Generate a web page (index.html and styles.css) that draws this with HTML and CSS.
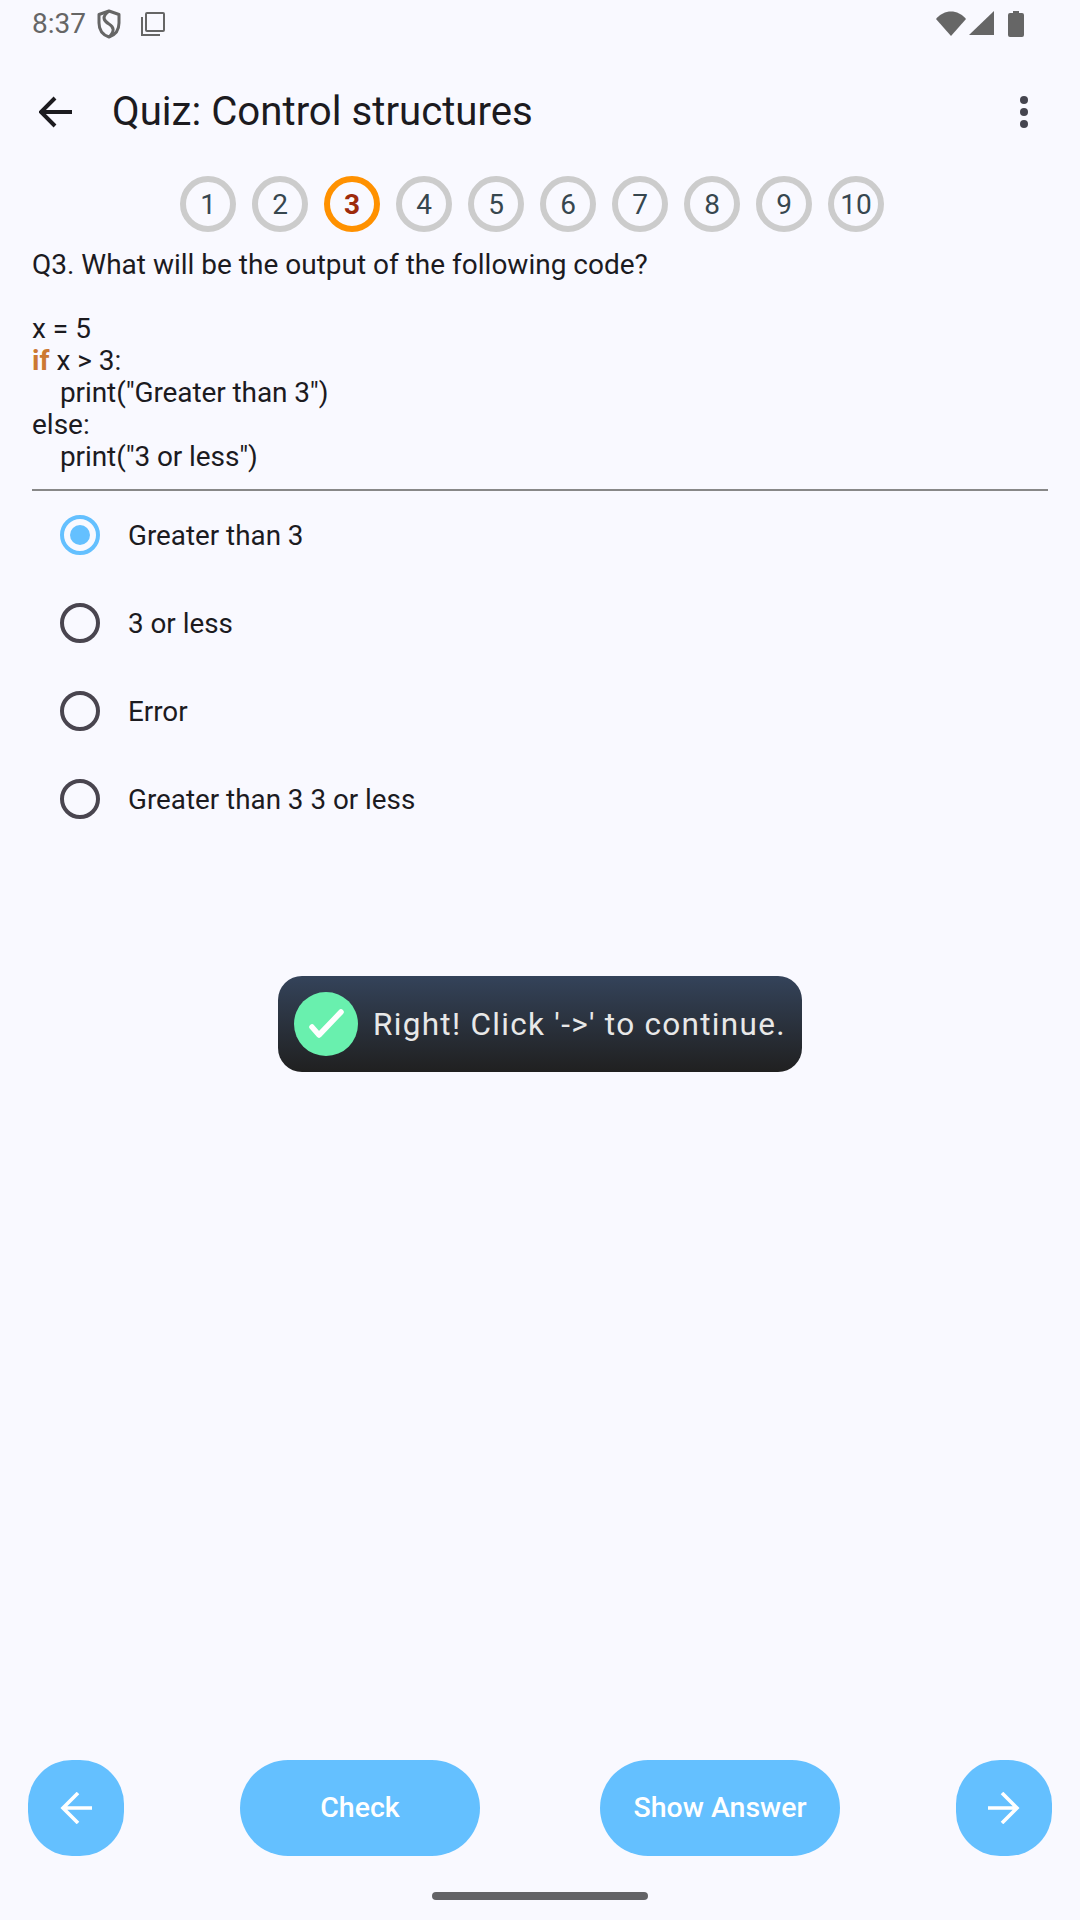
FILE: index.html
```html
<!DOCTYPE html>
<html lang="en">

<head>
    <meta charset="UTF-8">
    <meta name="viewport" content="width=device-width, initial-scale=1.0">
    <title>Quiz: Control structures</title>
    <link rel="stylesheet" href="styles.css">
</head>

<body>
    <div class="screen">
        <div class="status-bar">
            <div class="status-left">
                <span class="status-time">8:37</span>
                <svg class="icon-shield" width="24" height="30" viewBox="0 0 24 30">
                    <path d="M12 2 L22 5.5 V14 C22 21 18 26 12 28 C6 26 2 21 2 14 V5.5 Z" fill="none" stroke="#666" stroke-width="3" stroke-linejoin="round" />
                    <path d="M12 2 C4 8 7 12 12 15 C17 18 18 22 12 28" fill="none" stroke="#666" stroke-width="3" />
                </svg>
                <svg class="icon-copy" width="26" height="26" viewBox="0 0 26 26">
                    <rect x="6" y="2" width="18" height="18" rx="1" fill="none" stroke="#666" stroke-width="2" />
                    <path d="M2 6 V24 H20" fill="none" stroke="#666" stroke-width="2" />
                </svg>
            </div>
            <div class="status-right">
                <svg width="30" height="26" viewBox="0 0 30 26">
                    <path d="M0 8 C8 -2 22 -2 30 8 L15 25 Z" fill="#666" />
                </svg>
                <svg width="25" height="24" viewBox="0 0 25 24">
                    <path d="M25 0 V24 H0 Z" fill="#666" />
                </svg>
                <svg class="icon-battery" width="16" height="26" viewBox="0 0 16 26">
                    <path d="M5 0 H11 V2 H14 Q16 2 16 4 V24 Q16 26 14 26 H2 Q0 26 0 24 V4 Q0 2 2 2 H5 Z" fill="#666" />
                </svg>
            </div>
        </div>

        <div class="toolbar">
            <svg class="toolbar-back" width="34" height="32" viewBox="0 0 34 32">
                <path d="M33 16 H3 M16 2 L2 16 L16 30" fill="none" stroke="#1c1b1f" stroke-width="4" />
            </svg>
            <div class="toolbar-title">Quiz: Control structures</div>
            <svg class="toolbar-menu" width="8" height="32" viewBox="0 0 8 32">
                <circle cx="4" cy="4" r="4" fill="#45454f" />
                <circle cx="4" cy="16" r="4" fill="#45454f" />
                <circle cx="4" cy="28" r="4" fill="#45454f" />
            </svg>
        </div>

        <div class="steps">
            <div class="step">1</div>
            <div class="step">2</div>
            <div class="step step-current">3</div>
            <div class="step">4</div>
            <div class="step">5</div>
            <div class="step">6</div>
            <div class="step">7</div>
            <div class="step">8</div>
            <div class="step">9</div>
            <div class="step">10</div>
        </div>

        <div class="question">
            <div>Q3. What will be the output of the following code?</div>
            <div>&nbsp;</div>
            <div>x = 5</div>
            <div><span class="keyword">if</span> x &gt; 3:</div>
            <div class="indent">print("Greater than 3")</div>
            <div>else:</div>
            <div class="indent">print("3 or less")</div>
        </div>

        <div class="divider"></div>

        <div class="options">
            <div class="option">
                <span class="radio radio-checked"></span>
                <span>Greater than 3</span>
            </div>
            <div class="option">
                <span class="radio"></span>
                <span>3 or less</span>
            </div>
            <div class="option">
                <span class="radio"></span>
                <span>Error</span>
            </div>
            <div class="option">
                <span class="radio"></span>
                <span>Greater than 3 3 or less</span>
            </div>
        </div>

        <div class="toast">
            <span class="toast-icon">
                <svg width="64" height="64" viewBox="0 0 64 64">
                    <path d="M18 35 L25 43 L47 20" fill="none" stroke="#fff" stroke-width="5.5" stroke-linecap="round" stroke-linejoin="round" />
                </svg>
            </span>
            <span class="toast-text">Right! Click '-&gt;' to continue.</span>
        </div>

        <div class="actions">
            <button class="round-btn" aria-label="Previous">
                <svg width="32" height="32" viewBox="0 0 32 32">
                    <path d="M32 16 H3 M18 1 L3 16 L18 31" fill="none" stroke="#fff" stroke-width="3.6" />
                </svg>
            </button>
            <div class="action-middle">
                <button class="pill-btn">Check</button>
                <button class="pill-btn">Show Answer</button>
            </div>
            <button class="round-btn" aria-label="Next">
                <svg width="32" height="32" viewBox="0 0 32 32">
                    <path d="M0 16 H29 M14 1 L29 16 L14 31" fill="none" stroke="#fff" stroke-width="3.6" />
                </svg>
            </button>
        </div>

        <div class="home-bar">
            <div class="home-pill"></div>
        </div>
    </div>
</body>

</html>
```

FILE: styles.css
```css
* {
    box-sizing: border-box;
}

body {
    margin: 0;
    padding: 0;
    background-color: #f9f9ff;
    font-family: Roboto, sans-serif;
    color: #1c1b1f;
}

.screen {
    position: relative;
    width: 1080px;
    height: 1920px;
    display: flex;
    flex-direction: column;
    overflow: hidden;
}

.status-bar {
    height: 63px;
    padding: 11px 56px 0 32px;
    display: flex;
    justify-content: space-between;
    align-items: flex-start;
}

.status-left {
    display: flex;
    align-items: center;
    height: 26px;
}

.status-time {
    font-size: 28px;
    line-height: 26px;
    color: #666;
}

.icon-shield {
    margin-left: 11px;
}

.icon-copy {
    margin-left: 19px;
}

.status-right {
    display: flex;
    align-items: flex-start;
    gap: 3px;
}

.icon-battery {
    margin-left: 11px;
}

.toolbar {
    height: 98px;
    display: flex;
    align-items: center;
    padding: 0 52px 0 39px;
}

.toolbar-title {
    flex-grow: 1;
    margin-left: 39px;
    margin-bottom: 2px;
    font-size: 40.2px;
}

.steps {
    margin-top: 15px;
    padding-right: 16px;
    display: flex;
    justify-content: center;
    gap: 16px;
}

.step {
    width: 56px;
    height: 56px;
    border: 6px solid #cccccc;
    border-radius: 50%;
    display: flex;
    align-items: center;
    justify-content: center;
    font-size: 28px;
    color: #37474f;
}

.step-current {
    border-color: #ff9100;
    color: #9e2a0b;
    font-weight: bold;
}

.question {
    margin-top: 17px;
    padding: 0 32px;
    font-size: 28px;
    line-height: 32px;
}

.indent {
    padding-left: 28px;
    letter-spacing: -0.1px;
}

.keyword {
    color: #cc7832;
    font-weight: bold;
}

.divider {
    margin: 16px 32px 0;
    height: 2px;
    background: #888888;
}

.options {
    margin-top: 0;
    padding-left: 60px;
}

.option {
    height: 88px;
    display: flex;
    align-items: center;
    gap: 28px;
    font-size: 27.8px;
}

.radio {
    width: 40px;
    height: 40px;
    border: 4px solid #49454f;
    border-radius: 50%;
    display: flex;
    align-items: center;
    justify-content: center;
}

.radio-checked {
    border-color: #64c0ff;
}

.radio-checked::after {
    content: "";
    width: 20px;
    height: 20px;
    border-radius: 50%;
    background: #64c0ff;
}

.toast {
    position: absolute;
    left: 278px;
    top: 976px;
    width: 524px;
    height: 96px;
    padding-left: 16px;
    border-radius: 24px;
    background: linear-gradient(180deg, #34435a, #202020);
    display: flex;
    align-items: center;
    gap: 15px;
}

.toast-icon {
    width: 64px;
    height: 64px;
    border-radius: 50%;
    background: #69f0ae;
    display: flex;
}

.toast-text {
    font-size: 31.5px;
    letter-spacing: 1.3px;
    color: #e8e8e8;
    white-space: nowrap;
}

.actions {
    margin-top: auto;
    padding: 0 28px;
    display: flex;
    justify-content: space-between;
}

.action-middle {
    display: flex;
    gap: 120px;
}

.round-btn,
.pill-btn {
    height: 96px;
    border: none;
    background: #64c0ff;
    color: white;
    font-family: Roboto, sans-serif;
    font-size: 28.5px;
    font-weight: 500;
    padding: 0 0 2px;
    display: flex;
    align-items: center;
    justify-content: center;
}

.round-btn {
    width: 96px;
    border-radius: 44px;
    padding: 0;
}

.pill-btn {
    width: 240px;
    border-radius: 48px;
}

.home-bar {
    height: 64px;
    padding-top: 36px;
    display: flex;
    justify-content: center;
}

.home-pill {
    width: 216px;
    height: 8px;
    border-radius: 4px;
    background: #636366;
}
```
